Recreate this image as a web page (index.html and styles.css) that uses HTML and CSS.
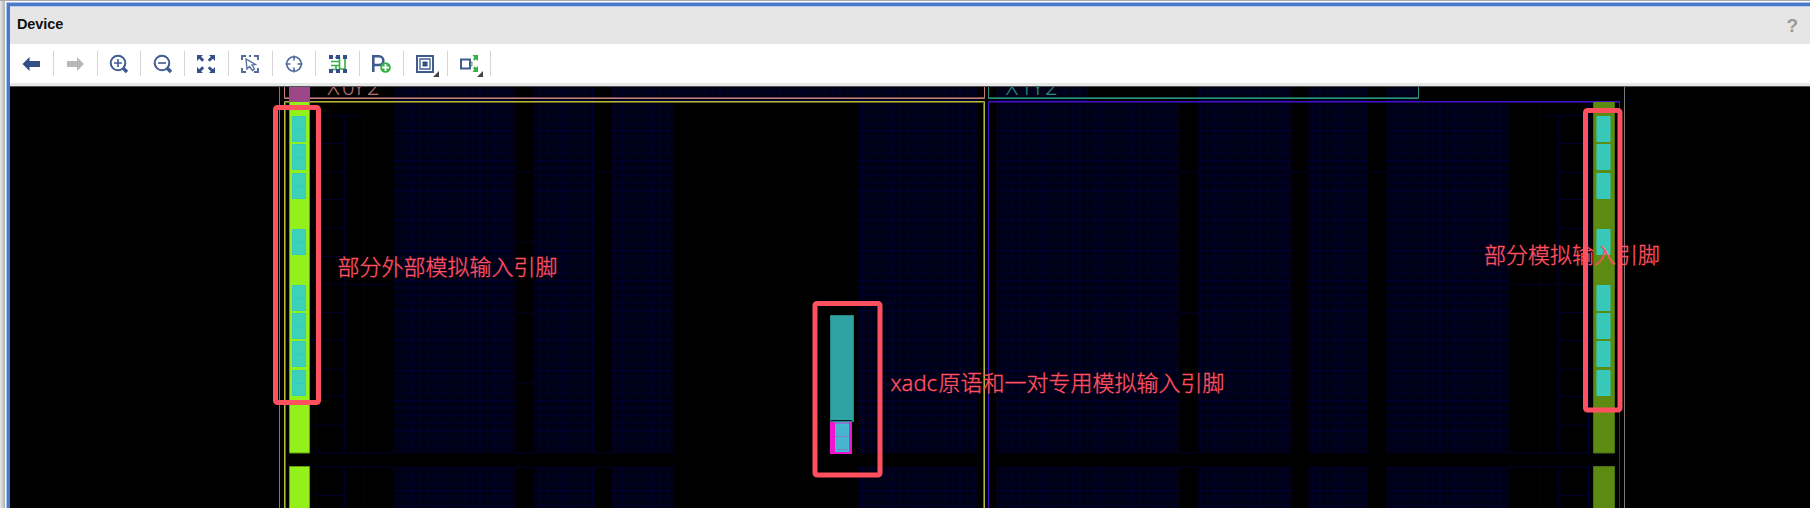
FILE: index.html
```html
<!DOCTYPE html>
<html lang="zh">
<head>
<meta charset="utf-8">
<title>Device</title>
<link rel="stylesheet" href="styles.css">
</head>
<body>
<div class="window">
  <div class="panel">
    <header class="titlebar"><span class="title">Device</span><span class="help">?</span></header>
    <nav class="toolbar">
      <div class="tool"><svg class="icon" viewBox="0 0 24 24"><path fill="#344f87" d="M3.500 12l7-7v4H21v6H10.500v4z"/></svg></div>
      <div class="tool"><svg class="icon" viewBox="0 0 24 24"><path fill="#b8b8b8" d="M21 12l-7-7v4H4v6h10v4z"/></svg></div>
      <div class="tool"><svg class="icon" viewBox="0 0 24 24"><g fill="none" stroke="#405b90" stroke-width="2"><circle cx="11" cy="11" r="7.300"/><path d="M16 16l4 4" stroke-width="3.400"/><path d="M7 11h8M11 7v8" stroke-width="1.600"/></g></svg></div>
      <div class="tool"><svg class="icon" viewBox="0 0 24 24"><g fill="none" stroke="#405b90" stroke-width="2"><circle cx="11" cy="11" r="7.300"/><path d="M16 16l4 4" stroke-width="3.400"/><path d="M7 11h8" stroke-width="1.600"/></g></svg></div>
      <div class="tool"><svg class="icon" viewBox="0 0 24 24"><path fill="#344f87" d="M3 3h6L7.200 4.800l3 3-2 2-3-3L3 9zM21 3h-6l1.800 1.800-3 3 2 2 3-3L21 9zM3 21h6l-1.800-1.800 3-3-2-2-3 3L3 15zM21 21h-6l1.800-1.800-3-3 2-2 3 3L21 15z"/></svg></div>
      <div class="tool"><svg class="icon" viewBox="0 0 24 24"><g fill="none" stroke="#506a9c"><path stroke-width="1.900" d="M4 8V4h4M16 4h4v4M20 16v4h-4M8 20H4v-4M11 4h2"/><path stroke-width="1.300" d="M8 7l1 10 2.500-2.500 3 4 2-1.500-2.500-4 3.500-.5z"/></g></svg></div>
      <div class="tool"><svg class="icon" viewBox="0 0 24 24"><g fill="none" stroke="#506a9c" stroke-width="1.600"><circle cx="12" cy="12" r="7.300"/><path d="M12 3.500v5M12 15.500v5M3.500 12h5M15.500 12h5"/></g></svg></div>
      <div class="tool"><svg class="icon" viewBox="0 0 24 24"><path fill="none" stroke="#35b044" stroke-width="1.600" d="M5 9.500h9M5 13.500h9M5 17.500h5v-4M13.500 5v12M9 5.500h5M19 7v10h-5"/><path fill="#344f87" d="M3 3h4v4H3zM10 3h4v4h-4zM17 3h4v4h-4zM3 17h4v4H3zM10 17h4v4h-4zM17 17h4v4h-4z"/></svg></div>
      <div class="tool"><svg class="icon" viewBox="0 0 24 24"><path fill="none" stroke="#405b90" stroke-width="2.600" d="M4.300 20V4.300H10a4.300 4.300 0 0 1 0 8.700H5"/><circle cx="16.500" cy="15.500" r="5.300" fill="#35b044"/><path stroke="#fff" stroke-width="1.900" d="M13 15.500h7M16.500 12v7"/></svg></div>
      <div class="tool"><svg class="icon" viewBox="0 0 24 24"><g fill="none" stroke="#405b90"><path stroke-width="2" d="M4 4h16v16H4z"/><path stroke-width="1.300" d="M7 7h10v10H7z"/></g><path fill="#344f87" d="M9.500 9.500h5v5h-5z"/><path fill="#444" d="M26 19v6h-6z"/></svg></div>
      <div class="tool"><svg class="icon" viewBox="0 0 24 24"><path fill="none" stroke="#405b90" stroke-width="2" d="M4 7.500h9v9H4z"/><path fill="#35b044" d="M21 3v6l-2-1.800-1.500 1.300-1.500-1.500 1.300-1.500L15.500 3zM21 20v-6l-2 1.800-1.500-1.300-1.500 1.500 1.300 1.500-1.800 2.500zM14.500 9.500l1.500 1.500-1 1-1.500-1.500zM14.500 14.500l1.500-1.500-1-1-1.500 1.500z"/><path fill="#444" d="M26 19v6h-6z"/></svg></div>
    </nav>
    <svg class="device" viewBox="10 86 1800 422">
      <defs>
        <pattern id="fabric" width="30" height="30" x="393" y="100" patternUnits="userSpaceOnUse">
          <rect width="30" height="30" fill="#000014"/>
          <path stroke="#00002c" d="M0 8h30M0 15.500h30M0 23h30M4.500 0v30M12 0v30M19.500 0v30M27 0v30"/>
          <path stroke="#00003c" d="M0 .5h30"/>
        </pattern>
        <g id="pad">
          <path d="M.5 .5h13v25H.5z"/>
          <path d="M0 13.500h14"/>
        </g>
        <g id="pads">
          <use href="#pad" y="116"/><use href="#pad" y="144"/><use href="#pad" y="173"/><use href="#pad" y="229"/>
          <use href="#pad" y="285"/><use href="#pad" y="313"/><use href="#pad" y="341"/><use href="#pad" y="370"/>
        </g>
      </defs>

      <path fill="url(#fabric)" d="M393 86h123v367H393zM534 86h61v367h-61zM612 86h62v367h-62zM674 86h303v15H674zM857 101h120v352H857zM996 86h92v15h-92zM996 101h184v352H996zM1198 86h93v367h-93zM1308 86h60v367h-60zM1386 86h32v15h-32zM1386 101h123v352h-123z"/>
      <path fill="url(#fabric)" d="M393 467h123v41H393zM534 467h61v41h-61zM612 467h62v41h-62zM857 467h120v41H857zM996 467h184v41H996zM1198 467h93v41h-93zM1308 467h60v41h-60zM1386 467h123v41h-123z"/>

      <path class="wire" d="M315.500 115v338M344.500 115v338M363.500 115v338M315.500 467v41M344.500 467v41M363.500 467v41M315 115.500h48M315 143.500h29M315 172.500h29M315 199.500h29M315 228.500h29M315 256.500h29M315 284.500h78M315 312.500h29M285 340.500h59M315 369.500h29M315 396.500h29M315 425.500h29M315 453h78M315 467h78M315 495.500h29M516 172h18M595 172h17M516 242h18M516 313h18M516 383h18M516 453h18M595 453h17M516 467h18M595 467h17M1180 172h18M1291 172h17M1368 172h18M1180 313h18M1180 453h18M1180 467h18"/>
      <path class="wire" d="M1539.500 103v350M1558.500 115v338M1588.500 103v350M1539.500 467v41M1558.500 467v41M1588.500 467v41M1539 115.500h50M1558 143.500h31M1558 172.500h31M1558 199.500h31M1558 228.500h31M1558 256.500h31M1509 284.500h80M1558 312.500h31M1558 340.500h60M1558 369.500h31M1558 396.500h31M1558 425.500h31M1509 453h110M1509 467h110M1558 495.500h31"/>

      <path class="edge" d="M279.500 86v422M1624.500 86v422"/>
      <path fill="none" stroke="#c47c7a" d="M284.500 86v12.500h700V86"/>
      <path fill="none" stroke="#744b4e" d="M285 97.500h699"/>
      <path fill="none" stroke="#2b8f7e" d="M988.500 86v12.500h430V86"/>
      <path fill="none" stroke="#1f6055" d="M989 97.500h429"/>
      <path fill="none" stroke="#b4ba3a" d="M284.500 508V101.500h700v406.500"/>
      <path fill="none" stroke="#65691f" d="M285.500 508V102.500h698v406"/>
      <path fill="none" stroke="#4312c4" d="M988.500 508V101.500h631v406.500"/>
      <path fill="none" stroke="#240a78" d="M989 102.500h630"/>

      <text class="region" x="327.500 342 353 367" y="95" fill="#b87573" stroke="#b87573">X0Y2</text>
      <text class="region" x="1006 1020 1032 1045" y="95" fill="#2b8f7e" stroke="#2b8f7e">X1Y2</text>

      <path fill="#9b4788" d="M289 86h21v16h-21z"/>
      <path fill="#93f01a" stroke="#65a012" d="M289.500 102v351h20V102M289.500 508v-41.500h20V508"/>
      <g class="pads-left"><use href="#pads" x="292"/></g>
      <path fill="#5d8b12" stroke="#4b7010" d="M1593.500 102v351h21V102M1593.500 508v-41.500h21V508"/>
      <g class="pads-right"><use href="#pads" x="1596.500"/></g>

      <path fill="#2fa3a3" stroke="#278989" d="M830.500 315.500h23v106h-23z"/>
      <path stroke="#081d1d" d="M831 420.500h21"/>
      <path fill="#f414d0" d="M830 422h22v32h-22z"/>
      <path fill="#827bd0" d="M835 422h14v3h-14z"/>
      <path fill="#48b5d0" stroke="#35c6cc" d="M835.500 424.500h13v27h-13z"/>
      <path stroke="#7a80cc" d="M835 436.500h14M837 449.500h10"/>

      <g class="mark">
        <rect x="275.500" y="107.500" width="43" height="295" rx="2"/>
        <rect x="815" y="303.500" width="65" height="171.500" rx="2"/>
        <rect x="1585.500" y="110.500" width="34.500" height="299.500" rx="2"/>
      </g>
      <text class="note" x="337.500" y="274.500">部分外部模拟输入引脚</text>
      <text class="note" x="890.500" y="391">xadc<tspan x="938.500">原语和一对专用模拟输入引脚</tspan></text>
      <text class="note" x="1484" y="262.500">部分模拟输入引脚</text>
      <path stroke="#555" d="M10 86.500h1800"/>
    </svg>
  </div>
</div>
</body>
</html>
```

FILE: styles.css
```css
body {
  margin: 0;
  background: #fff;
  overflow: hidden;
}

.window {
  box-sizing: border-box;
  height: 508px;
  padding: 1px 0 0 5px;
  border-top: 1px solid #aaa;
  background: linear-gradient(90deg, #e8e8e8, #b0b0b0 5px, #fff 5px);
}

.panel {
  box-sizing: border-box;
  height: 506px;
  margin-left: 1px;
  padding: 3px 0 0 3px;
  border-top: 1px solid #a9c1e8;
  border-left: 1px solid #a9c1e8;
  background: #4a7bcb;
  display: flex;
  flex-direction: column;
}

.titlebar {
  box-sizing: border-box;
  height: 38px;
  flex: none;
  display: flex;
  align-items: center;
  justify-content: space-between;
  padding: 0 12px 4px 7px;
  border-top: 1px solid #b9cbea;
  background: #e6e6e6;
  font-family: "Liberation Sans", Arial, sans-serif;
  font-weight: bold;
}

.title {
  font-size: 14.5px;
  letter-spacing: -0.1px;
  color: #111;
}

.help {
  font-size: 19px;
  color: #999;
  padding-top: 5px;
}

.toolbar {
  box-sizing: border-box;
  height: 42px;
  flex: none;
  display: flex;
  align-items: center;
  background: #fff;
  border-bottom: 3px solid #e6e8e8;
}

.tool {
  box-sizing: border-box;
  width: 43.75px;
  height: 25px;
  display: flex;
  align-items: center;
  justify-content: center;
  border-right: 1px solid #d6d6d6;
}

.icon {
  width: 24px;
  height: 24px;
  overflow: visible;
}

.device {
  width: 1800px;
  height: 422px;
  flex: none;
  display: block;
  background: #000;
}

.wire {
  fill: none;
  stroke: #00002c;
}

.edge {
  stroke: #7a7a7a;
}

.region {
  font-family: "Open Sans", sans-serif;
  font-weight: 300;
  font-size: 22px;
  stroke-width: 0.2px;
}

.pads-left {
  fill: #3dd2b8;
  stroke: #34c9c4;
}

.pads-right {
  fill: #38c8b8;
  stroke: #32ccc8;
}

.mark {
  fill: none;
  stroke: #ff5060;
  stroke-width: 5;
}

.note {
  font-family: "Noto Sans", "Noto Sans CJK SC", sans-serif;
  font-size: 22px;
  font-weight: 300;
  fill: #ff5060;
  stroke: #ff5060;
  stroke-width: 0.35px;
}
```
